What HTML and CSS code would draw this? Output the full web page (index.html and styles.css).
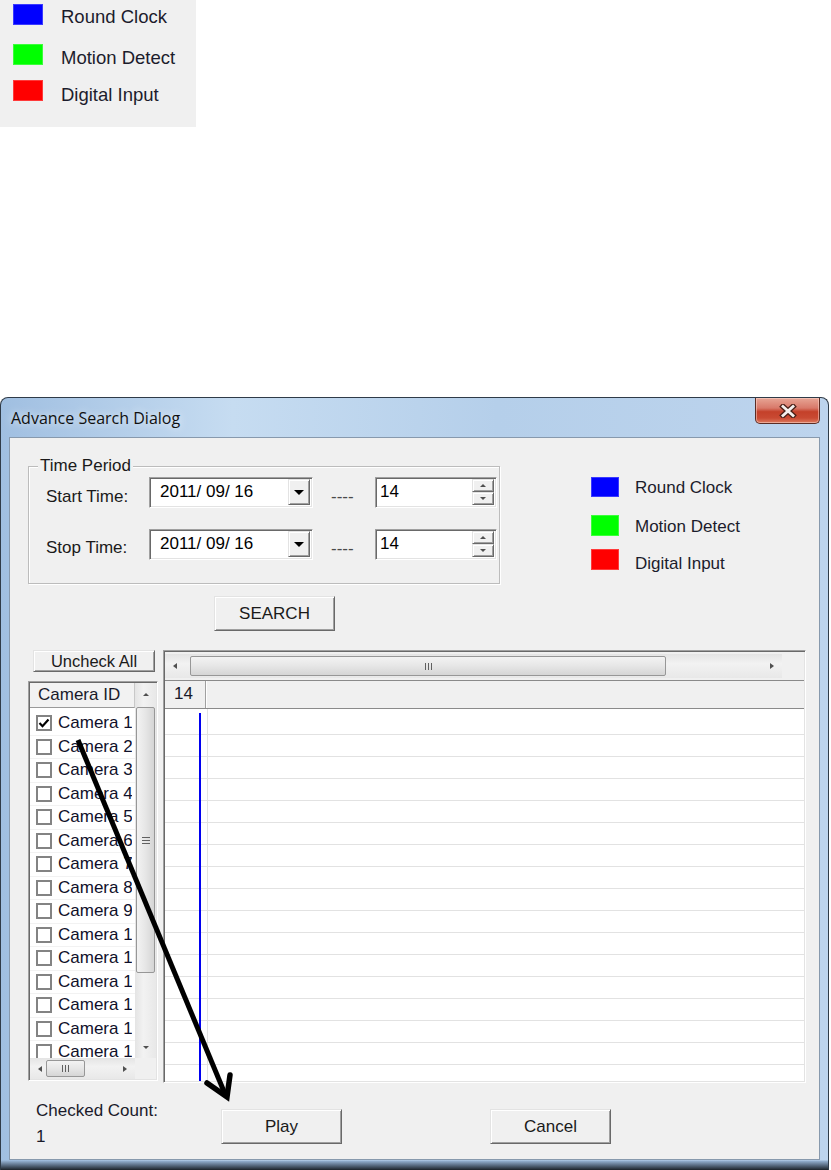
FILE: index.html
```html
<!DOCTYPE html>
<html>
<head>
<meta charset="utf-8">
<title>Advance Search Dialog</title>
<link rel="stylesheet" href="styles.css">
</head>
<body>
<div class="legend-top">
  <div class="lt-item"><span class="sw blue"></span><span class="lt-t">Round Clock</span></div>
  <div class="lt-item"><span class="sw green"></span><span class="lt-t">Motion Detect</span></div>
  <div class="lt-item"><span class="sw red"></span><span class="lt-t">Digital Input</span></div>
</div>

<div class="dialog">
  <div class="titlebar">
    <span class="title">Advance Search Dialog</span>
    <div class="close">
      <svg width="20" height="14" viewBox="0 0 20 14"><path d="M5 2.5 L15 11.5 M15 2.5 L5 11.5" stroke="#4a2018" stroke-width="5.4" stroke-linecap="square"/><path d="M5 2.5 L15 11.5 M15 2.5 L5 11.5" stroke="#f4f0ee" stroke-width="2.8" stroke-linecap="square"/></svg>
    </div>
  </div>
  <div class="client">
    <div class="top-row">
      <div class="group">
        <div class="glabel">Time Period</div>
        <div class="tp-grid">
          <span class="lbl">Start Time:</span>
          <div class="combo"><span class="val">2011/ 09/ 16</span><span class="drop"><i class="tri-down"></i></span></div>
          <span class="dash">----</span>
          <div class="spin"><span class="val">14</span><span class="spin-btns"><span class="sb"><i class="tri-up-s"></i></span><span class="sb"><i class="tri-down-s"></i></span></span></div>

          <span class="lbl lbl2">Stop Time:</span>
          <div class="combo"><span class="val">2011/ 09/ 16</span><span class="drop"><i class="tri-down"></i></span></div>
          <span class="dash">----</span>
          <div class="spin"><span class="val">14</span><span class="spin-btns"><span class="sb"><i class="tri-up-s"></i></span><span class="sb"><i class="tri-down-s"></i></span></span></div>
        </div>
      </div>
      <div class="legend-r">
        <div class="lr-item"><span class="sw blue"></span><span class="lr-t">Round Clock</span></div>
        <div class="lr-item"><span class="sw green"></span><span class="lr-t">Motion Detect</span></div>
        <div class="lr-item"><span class="sw red"></span><span class="lr-t">Digital Input</span></div>
      </div>
    </div>

    <button class="btn search">SEARCH</button>

    <div class="main-row">
      <div class="left-col">
        <button class="btn uncheck">Uncheck All</button>
        <div class="camlist">
          <div class="cl-body">
            <div class="cl-main">
              <div class="cl-header">Camera ID</div>
              <div class="cl-rows">
                <div class="cam"><span class="cb checked"><svg width="12" height="12" viewBox="0 0 12 12"><path d="M1.5 6 L4.5 9.2 L10.5 2.5" fill="none" stroke="#000" stroke-width="2.2"/></svg></span><span class="cn">Camera 1</span></div>
                <div class="cam"><span class="cb"></span><span class="cn">Camera 2</span></div>
                <div class="cam"><span class="cb"></span><span class="cn">Camera 3</span></div>
                <div class="cam"><span class="cb"></span><span class="cn">Camera 4</span></div>
                <div class="cam"><span class="cb"></span><span class="cn">Camera 5</span></div>
                <div class="cam"><span class="cb"></span><span class="cn">Camera 6</span></div>
                <div class="cam"><span class="cb"></span><span class="cn">Camera 7</span></div>
                <div class="cam"><span class="cb"></span><span class="cn">Camera 8</span></div>
                <div class="cam"><span class="cb"></span><span class="cn">Camera 9</span></div>
                <div class="cam"><span class="cb"></span><span class="cn">Camera 10</span></div>
                <div class="cam"><span class="cb"></span><span class="cn">Camera 11</span></div>
                <div class="cam"><span class="cb"></span><span class="cn">Camera 12</span></div>
                <div class="cam"><span class="cb"></span><span class="cn">Camera 13</span></div>
                <div class="cam"><span class="cb"></span><span class="cn">Camera 14</span></div>
                <div class="cam"><span class="cb"></span><span class="cn">Camera 15</span></div>
                <div class="cam"><span class="cb"></span><span class="cn">Camera 16</span></div>
              </div>
            </div>
            <div class="vscroll">
              <span class="sarrow"><i class="tri-up-s"></i></span>
              <div class="vtrack"><div class="vthumb"><span class="grip-v"></span></div></div>
              <span class="sarrow"><i class="tri-down-s"></i></span>
            </div>
          </div>
          <div class="cl-foot">
            <div class="hscroll small">
              <span class="harrow"><i class="tri-left-s"></i></span>
              <div class="htrack"><div class="hthumb th-small"><span class="grip-h"></span></div></div>
              <span class="harrow"><i class="tri-right-s"></i></span>
            </div>
            <div class="corner"></div>
          </div>
        </div>
      </div>

      <div class="timeline">
        <div class="tl-scrollrow">
          <div class="hscroll big">
            <span class="harrow"><i class="tri-left-s"></i></span>
            <div class="htrack"><div class="hthumb th-big"><span class="grip-h"></span></div></div>
            <span class="harrow"><i class="tri-right-s"></i></span>
          </div>
        </div>
        <div class="tl-header"><span class="tl-cell">14</span></div>
        <div class="tl-grid">
          <div class="tl-row"></div><div class="tl-row"></div><div class="tl-row"></div><div class="tl-row"></div>
          <div class="tl-row"></div><div class="tl-row"></div><div class="tl-row"></div><div class="tl-row"></div>
          <div class="tl-row"></div><div class="tl-row"></div><div class="tl-row"></div><div class="tl-row"></div>
          <div class="tl-row"></div><div class="tl-row"></div><div class="tl-row"></div><div class="tl-row"></div>
          <div class="tl-row"></div>
          <div class="rec-bar" style="left:34px"></div>
        </div>
      </div>
    </div>

    <div class="bottom-row">
      <div class="count">
        <div>Checked Count:</div>
        <div class="count-val">1</div>
      </div>
      <button class="btn play">Play</button>
      <button class="btn cancel">Cancel</button>
    </div>
  </div>
</div>

<svg class="arrow" width="831" height="1170" viewBox="0 0 831 1170">
  <line x1="78" y1="740" x2="225" y2="1094" stroke="#000" stroke-width="5"/>
  <polyline points="207,1083 227,1097 230,1075" fill="none" stroke="#000" stroke-width="5.5" stroke-linecap="round" stroke-linejoin="miter"/>
</svg>
</body>
</html>
```

FILE: styles.css
```css
* { box-sizing: border-box; }

body {
  margin: 0;
  width: 831px;
  height: 1170px;
  position: relative;
  overflow: hidden;
  background: #ffffff;
  font-family: "Liberation Sans", Arial, sans-serif;
  font-size: 17px;
  color: #000;
}

/* ---------- top legend ---------- */
.legend-top {
  width: 196px;
  height: 127px;
  background: #f0f0f0;
  padding: 4px 0 0 13px;
  font-size: 18.5px;
  color: #1c1c2c;
}
.lt-item { display: flex; align-items: flex-start; height: 21px; }
.lt-item .sw { width: 30px; height: 21px; margin-right: 18px; }
.lt-t { line-height: 21px; white-space: nowrap; }
.lt-item:nth-child(1) { margin-bottom: 19px; }
.lt-item:nth-child(1) .lt-t { margin-top: 2px; }
.lt-item:nth-child(2) { margin-bottom: 15px; }
.lt-item:nth-child(2) .lt-t { margin-top: 3px; }
.lt-item:nth-child(3) .lt-t { margin-top: 4px; }

.sw { display: block; flex: none; }
.sw.blue { background: #0000ff; box-shadow: inset 0 0 0 1px #3a3aff; }
.sw.green { background: #00ff00; box-shadow: inset 0 0 0 1px #3aff3a; }
.sw.red { background: #ff0000; box-shadow: inset 0 0 0 1px #ff3a3a; }

/* ---------- dialog frame ---------- */
.dialog {
  margin-top: 270px;
  width: 829px;
  height: 773px;
  border: 1px solid #2f3b48;
  border-bottom: none;
  border-radius: 8px 8px 0 0;
  padding: 0 8px 10px 8px;
  display: flex;
  flex-direction: column;
  background:
    linear-gradient(to top, #1c2229 0px, #4f6074 4px, #93afcf 9px, rgba(0,0,0,0) 10px),
    linear-gradient(to right, #a0bfe1 0%, #c6dcf1 28%, #b5cfea 60%, #bdd4ed 100%);
}
.titlebar {
  height: 39px;
  display: flex;
  align-items: flex-start;
  flex: none;
}
.title {
  font-family: "Open Sans", "Noto Sans", sans-serif;
  font-size: 16px;
  color: #101010;
  margin: 9px 0 0 2px;
  text-shadow: 0 0 8px rgba(255,255,255,0.9);
}
.close {
  margin-left: auto;
  width: 65px;
  height: 26px;
  border: 1px solid #5b2c24;
  border-top: none;
  border-radius: 0 0 5px 5px;
  background: linear-gradient(to bottom, #e7a595 0%, #d8796a 40%, #c4402a 55%, #c94a33 80%, #dd7a5e 100%);
  box-shadow: inset 0 0 0 1px rgba(255,220,210,0.5);
  display: flex;
  align-items: center;
  justify-content: center;
}

.client {
  flex: 1;
  background: #f0f0f0;
  border: 1px solid #8799ad;
  display: flex;
  flex-direction: column;
}

/* ---------- time period group ---------- */
.top-row { display: flex; align-items: flex-start; }
.group {
  margin: 28px 0 0 18px;
  width: 472px;
  height: 118px;
  border: 1px solid #bcbcbc;
  box-shadow: inset 1px 1px 0 #fff, 1px 1px 0 #fff;
}
.glabel {
  width: max-content;
  margin: -10px 0 0 9px;
  padding: 0 2px;
  line-height: 18px;
  background: #f0f0f0;
  color: #1a1a1a;
}
.tp-grid {
  margin-top: 2px;
  padding-left: 17px;
  display: grid;
  grid-template-columns: 103px 164px 62px 122px;
  grid-template-rows: 31px 31px;
  row-gap: 21px;
}
.lbl { align-self: center; padding-top: 9px; color: #1a1a1a; white-space: nowrap; }
.lbl2 { padding-top: 6px; }
.dash { align-self: center; padding: 9px 0 0 18px; color: #4a4a4a; }

.combo, .spin {
  display: flex;
  background: #fff;
  border-top: 1px solid #a0a0a0;
  border-left: 1px solid #a0a0a0;
  border-right: 1px solid #ffffff;
  border-bottom: 1px solid #ffffff;
  box-shadow: inset 1px 1px 0 #696969, inset -1px -1px 0 #e3e3e3;
  padding: 1px 2px 2px 1px;
}
.combo .val { flex: 1; align-self: center; padding-left: 9px; }
.spin .val { flex: 1; align-self: center; padding-left: 3px; }
.drop {
  width: 22px;
  background: #f0f0f0;
  border-top: 1px solid #e3e3e3;
  border-left: 1px solid #e3e3e3;
  border-right: 1px solid #696969;
  border-bottom: 1px solid #696969;
  box-shadow: inset 1px 1px 0 #fff, inset -1px -1px 0 #a0a0a0;
  display: flex;
  align-items: center;
  justify-content: center;
}
.spin-btns { width: 22px; display: flex; flex-direction: column; }
.sb {
  flex: 1;
  background: #f0f0f0;
  border-top: 1px solid #e3e3e3;
  border-left: 1px solid #e3e3e3;
  border-right: 1px solid #696969;
  border-bottom: 1px solid #696969;
  box-shadow: inset 1px 1px 0 #fff, inset -1px -1px 0 #a0a0a0;
  display: flex;
  align-items: center;
  justify-content: center;
}

/* triangles */
.tri-down { width: 0; height: 0; border-left: 5px solid transparent; border-right: 5px solid transparent; border-top: 5px solid #000; }
.tri-down-s { width: 0; height: 0; border-left: 3px solid transparent; border-right: 3px solid transparent; border-top: 3px solid #505050; }
.tri-up-s { width: 0; height: 0; border-left: 3px solid transparent; border-right: 3px solid transparent; border-bottom: 3px solid #505050; }
.tri-left-s { width: 0; height: 0; border-top: 3.5px solid transparent; border-bottom: 3.5px solid transparent; border-right: 4px solid #505050; }
.tri-right-s { width: 0; height: 0; border-top: 3.5px solid transparent; border-bottom: 3.5px solid transparent; border-left: 4px solid #505050; }

/* ---------- right legend ---------- */
.legend-r { margin: 39px 0 0 91px; color: #1c1c2c; }
.lr-item { display: flex; align-items: flex-start; height: 20px; }
.lr-item .sw { width: 28px; height: 20px; margin-right: 16px; }
.lr-t { line-height: 20px; white-space: nowrap; }
.lr-item:nth-child(1) { margin-bottom: 18px; }
.lr-item:nth-child(1) .lr-t { margin-top: 1px; }
.lr-item:nth-child(2) { margin-bottom: 13px; height: 21px; }
.lr-item:nth-child(2) .sw { height: 21px; }
.lr-item:nth-child(2) .lr-t { margin-top: 2px; }
.lr-item:nth-child(3) .sw { height: 21px; }
.lr-item:nth-child(3) .lr-t { margin-top: 5px; }

/* ---------- buttons ---------- */
.btn {
  display: block;
  font-family: "Liberation Sans", Arial, sans-serif;
  font-size: 17px;
  color: #1a1a1a;
  background: #f0f0f0;
  border-top: 1px solid #e3e3e3;
  border-left: 1px solid #e3e3e3;
  border-right: 1px solid #696969;
  border-bottom: 1px solid #696969;
  box-shadow: inset 1px 1px 0 #fff, inset -1px -1px 0 #a0a0a0;
  padding: 0;
  margin: 0;
  white-space: nowrap;
}
.search { margin: 12px 0 0 204px; width: 121px; height: 35px; }
.uncheck { margin-left: 5px; width: 122px; height: 22px; font-size: 16.5px; }
.play { margin-top: 7px; width: 121px; height: 35px; }
.cancel { margin: 7px 0 0 148px; width: 121px; height: 35px; }

/* ---------- main row ---------- */
.main-row { display: flex; margin: 19px 0 0 18px; }
.left-col { width: 130px; }

.camlist, .timeline {
  background: #f0f0f0;
  border-top: 1px solid #a0a0a0;
  border-left: 1px solid #a0a0a0;
  border-right: 1px solid #fff;
  border-bottom: 1px solid #fff;
  box-shadow: inset 1px 1px 0 #696969, inset -1px -1px 0 #e3e3e3;
  padding: 1px;
}
.camlist {
  margin-top: 9px;
  height: 400px;
  display: flex;
  flex-direction: column;
}
.cl-body { flex: 1; display: flex; min-height: 0; }
.cl-main { width: 105px; display: flex; flex-direction: column; overflow: hidden; }
.cl-header {
  height: 25px;
  flex: none;
  line-height: 24px;
  padding-left: 8px;
  color: #1a1a2a;
  background: #f2f2f2;
  border-right: 1px solid #c8c8c8;
  border-bottom: 1px solid #9a9a9a;
  white-space: nowrap;
}
.cl-rows { flex: 1; background: #fff; padding-top: 4px; overflow: hidden; }
.cam {
  height: 23.5px;
  display: flex;
  align-items: center;
  border-bottom: 1px solid #f2f2f2;
  white-space: nowrap;
}
.cb {
  flex: none;
  width: 16px;
  height: 16px;
  margin: 0 6px 0 6px;
  background: #fff;
  border: 2px solid #838383;
  display: flex;
  align-items: center;
  justify-content: center;
}
.cn { color: #10102a; flex: none; width: 74px; overflow: hidden; }

.vscroll {
  width: 21px;
  display: flex;
  flex-direction: column;
  background: linear-gradient(to right, #e4e4e4, #f2f2f2 40%, #e8e8e8);
}
.sarrow { height: 22px; display: flex; align-items: center; justify-content: center; flex: none; }
.vtrack { flex: 1; padding: 2px 1px; }
.vthumb {
  height: 266px;
  border: 1px solid #979797;
  border-radius: 2px;
  background: linear-gradient(to right, #f3f3f3, #e6e6e6 50%, #d5d5d5);
  display: flex;
  align-items: center;
  justify-content: center;
}
.grip-v { width: 8px; height: 7px; border-top: 1px solid #606060; border-bottom: 1px solid #606060; }
.grip-v::after { content: ""; display: block; margin-top: 2px; height: 1px; background: #606060; }

.cl-foot { height: 21px; display: flex; flex: none; }
.corner { width: 21px; background: #f0f0f0; }
.hscroll {
  display: flex;
  align-items: stretch;
  background: linear-gradient(to bottom, #e4e4e4, #f2f2f2 40%, #e8e8e8);
}
.hscroll.small { width: 105px; }
.harrow { width: 20px; flex: none; display: flex; align-items: center; justify-content: center; }
.htrack { flex: 1; padding: 2px 0; display: flex; }
.hthumb {
  border: 1px solid #979797;
  border-radius: 2px;
  background: linear-gradient(to bottom, #f3f3f3, #e6e6e6 50%, #d5d5d5);
  display: flex;
  align-items: center;
  justify-content: center;
}
.th-small { width: 39px; margin-left: -4px; }
.th-big { width: 476px; margin-left: 5px; }
.grip-h { width: 7px; height: 7px; border-left: 1px solid #606060; border-right: 1px solid #606060; }
.grip-h::after { content: ""; display: block; margin-left: 2px; width: 1px; height: 7px; background: #606060; }

/* ---------- timeline ---------- */
.timeline {
  margin-left: 5px;
  width: 643px;
  height: 433px;
  display: flex;
  flex-direction: column;
}
.tl-scrollrow { height: 28px; flex: none; padding-top: 2px; }
.hscroll.big { width: 617px; height: 24px; }
.tl-header {
  height: 29px;
  flex: none;
  border-top: 1px solid #8a8a8a;
  border-bottom: 1px solid #8a8a8a;
  background: #f0f0f0;
  display: flex;
}
.tl-cell {
  width: 41px;
  padding-left: 9px;
  line-height: 26px;
  border-right: 1px solid #a0a0a0;
  box-shadow: 1px 0 0 #fff;
  color: #1a1a2a;
}
.tl-grid {
  flex: 1;
  background:
    linear-gradient(to right, transparent 42px, #e2e2e2 42px, #e2e2e2 43px, transparent 43px),
    #fff;
  position: relative;
  overflow: hidden;
  padding-top: 4px;
}
.tl-row { height: 22px; border-bottom: 1px solid #e2e2e2; }
.rec-bar {
  position: absolute;
  top: 4px;
  bottom: 0;
  width: 2px;
  background: #0000f0;
}

/* ---------- bottom ---------- */
.bottom-row { display: flex; align-items: flex-start; margin-top: 19px; }
.count { margin-left: 26px; width: 185px; line-height: 18px; color: #1a1a2a; }
.count-val { margin-top: 8px; }

/* ---------- annotation arrow ---------- */
.arrow { position: absolute; left: 0; top: 0; pointer-events: none; }
```
